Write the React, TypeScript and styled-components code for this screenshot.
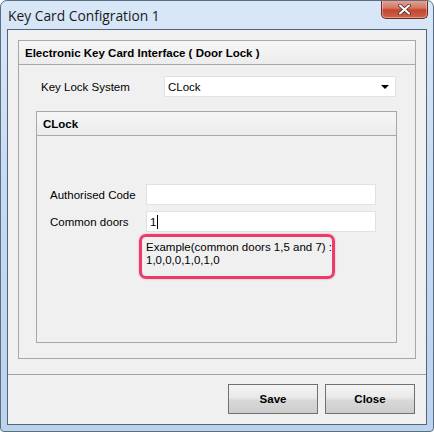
import React from "react";
import styled, { createGlobalStyle } from "styled-components";

const Global = createGlobalStyle`
  html, body { margin: 0; padding: 0; background: #ffffff; }
  body { font-family: "Liberation Sans", Arial, sans-serif; }
  * { box-sizing: border-box; }
`;

const Window = styled.div`
  width: 434px;
  height: 432px;
  display: flex;
  flex-direction: column;
  background: linear-gradient(180deg, #d9e8f8 0%, #c7dbf2 40%, #bcd3ee 100%);
  border: 1px solid #5c6d82;
  border-radius: 7px 7px 4px 4px;
  overflow: hidden;
`;

const TitleBar = styled.div`
  height: 28px;
  display: flex;
  align-items: flex-start;
  justify-content: space-between;
  padding-left: 7px;
`;

const Title = styled.div`
  font-family: "Open Sans", "Liberation Sans", sans-serif;
  font-size: 13.8px;
  color: #1b1b1b;
  margin-top: 5px;
`;

const CloseBtn = styled.div`
  width: 47px;
  height: 19px;
  margin-top: -1px;
  margin-right: 5px;
  border: 1px solid #6e2a22;
  border-top: none;
  border-radius: 0 0 5px 5px;
  background: linear-gradient(180deg, #e8a797 0%, #d47461 45%, #c24530 55%, #d0634a 100%);
  display: flex;
  align-items: center;
  justify-content: center;
  box-shadow: inset 0 0 0 1px rgba(255, 255, 255, 0.35);
`;

const Client = styled.div`
  flex: 1;
  margin: 0 6px 6px 6px;
  border: 1px solid #54647a;
  background: #f0f0f0;
  display: flex;
  flex-direction: column;
`;

const Body = styled.div`
  flex: 1;
  padding: 10px 10px 15px 10px;
  display: flex;
`;

const GroupBox = styled.div`
  flex: 1;
  border: 1px solid #a8a8a8;
  display: flex;
  flex-direction: column;
`;

const GroupHeader = styled.div<{ $h: number }>`
  height: ${(p) => p.$h}px;
  border-bottom: 1px solid #a8a8a8;
  background: linear-gradient(180deg, #f6f6f6 0%, #f0f0f0 60%, #ececec 100%);
  display: flex;
  align-items: center;
  padding-left: 6px;
  font-weight: bold;
  font-size: 11.5px;
  color: #000;
`;

const GroupContent = styled.div<{ $pad: string }>`
  flex: 1;
  padding: ${(p) => p.$pad};
  display: flex;
  flex-direction: column;
`;

const Row = styled.div<{ $labelW: number; $mt?: number }>`
  display: grid;
  grid-template-columns: ${(p) => p.$labelW}px 1fr;
  align-items: center;
  margin-top: ${(p) => p.$mt ?? 0}px;
`;

const Label = styled.div<{ $indent?: number }>`
  font-size: 11.5px;
  color: #000;
  padding-left: ${(p) => p.$indent ?? 0}px;
`;

const Field = styled.div<{ $w: number }>`
  width: ${(p) => p.$w}px;
  height: 21px;
  background: #fff;
  border: 1px solid #dfe1e6;
  display: flex;
  align-items: center;
  justify-content: space-between;
  padding: 0 6px 0 3px;
  font-size: 11.5px;
  color: #000;
`;

const TextValue = styled.div`
  display: flex;
  align-items: center;
`;

const Caret = styled.span`
  display: inline-block;
  width: 1px;
  height: 14px;
  background: #000;
  margin-left: 1px;
`;

const Arrow = styled.span`
  width: 0;
  height: 0;
  border-left: 4px solid transparent;
  border-right: 4px solid transparent;
  border-top: 4px solid #000;
  margin-top: 1px;
`;

const Inner = styled.div`
  margin: 14px 0 0 0;
  flex: 1;
  display: flex;
`;

const Hint = styled.div`
  margin: 2px 0 0 89px;
  width: 196px;
  height: 45px;
  border: 3px solid #ec3b6a;
  border-radius: 7px;
  box-shadow: 0 0 2px rgba(236, 59, 106, 0.5);
  padding: 4px 0 0 4px;
  font-size: 11.5px;
  line-height: 13px;
  white-space: nowrap;
  color: #000;
`;

const Footer = styled.div`
  height: 50px;
  border-top: 1px solid #a0a0a0;
  display: flex;
  justify-content: flex-end;
  gap: 7px;
  padding: 9px 11px 0 0;
`;

const Button = styled.button`
  width: 90px;
  height: 30px;
  border: 1px solid #707070;
  border-radius: 0;
  background: linear-gradient(180deg, #f4f4f4 0%, #e9e9e9 45%, #d8d8d8 55%, #cdcdcd 100%);
  font-family: "Liberation Sans", Arial, sans-serif;
  font-weight: bold;
  font-size: 11.5px;
  color: #000;
  padding: 0;
`;

export default function App() {
  return (
    <>
      <Global />
      <Window>
        <TitleBar>
          <Title>Key Card Configration 1</Title>
          <CloseBtn>
            <svg width="13" height="11" viewBox="0 0 13 11">
              <path d="M2 1.5 L11 9.5 M11 1.5 L2 9.5" stroke="#4b2b28" strokeWidth="3.6" strokeLinecap="round" />
              <path d="M2 1.5 L11 9.5 M11 1.5 L2 9.5" stroke="#ffffff" strokeWidth="2" strokeLinecap="round" />
            </svg>
          </CloseBtn>
        </TitleBar>
        <Client>
          <Body>
            <GroupBox>
              <GroupHeader $h={24}>Electronic Key Card Interface ( Door Lock )</GroupHeader>
              <GroupContent $pad="11px 18px 15px 17px">
                <Row $labelW={128}>
                  <Label $indent={5}>Key Lock System</Label>
                  <Field $w={232}>
                    CLock
                    <Arrow />
                  </Field>
                </Row>
                <Inner>
                  <GroupBox>
                    <GroupHeader $h={24}>CLock</GroupHeader>
                    <GroupContent $pad="48px 0 0 13px">
                      <Row $labelW={96}>
                        <Label>Authorised Code</Label>
                        <Field $w={230} />
                      </Row>
                      <Row $labelW={96} $mt={6}>
                        <Label>Common doors</Label>
                        <Field $w={230}>
                          <TextValue>
                            1<Caret />
                          </TextValue>
                        </Field>
                      </Row>
                      <Hint>
                        Example(common doors 1,5 and 7) :
                        <br />
                        1,0,0,0,1,0,1,0
                      </Hint>
                    </GroupContent>
                  </GroupBox>
                </Inner>
              </GroupContent>
            </GroupBox>
          </Body>
          <Footer>
            <Button>Save</Button>
            <Button>Close</Button>
          </Footer>
        </Client>
      </Window>
    </>
  );
}
